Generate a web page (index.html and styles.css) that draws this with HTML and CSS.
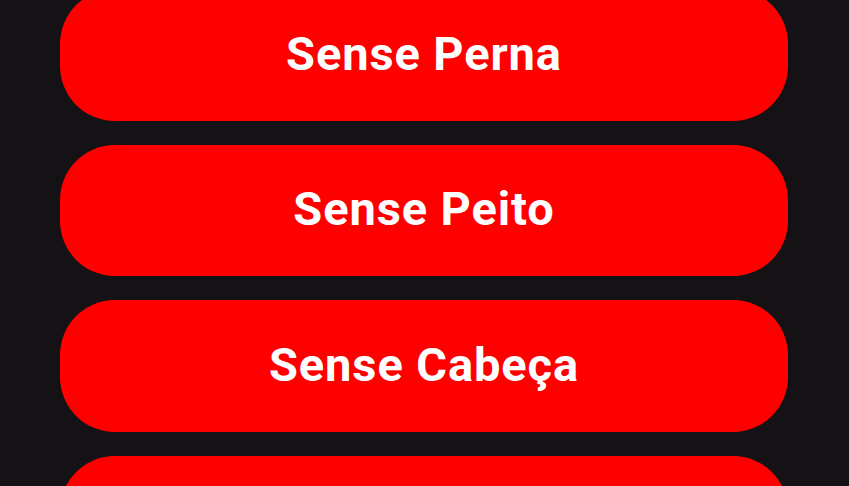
FILE: index.html
```html
<!DOCTYPE html>
<html>
<head>
<meta charset="utf-8">
<link rel="stylesheet" href="styles.css">
</head>
<body>
<div class="list">
  <button class="btn">Sense Perna</button>
  <button class="btn">Sense Peito</button>
  <button class="btn">Sense Cabeça</button>
  <button class="btn" aria-label="Sense Braço"></button>
</div>
</body>
</html>
```
FILE: styles.css
```css
html, body {
  margin: 0;
  padding: 0;
  background: #141214;
  height: 486px;
  overflow: hidden;
}
.list {
  display: flex;
  flex-direction: column;
  gap: 24px;
  padding: 0 61px 0 60px;
  margin-top: -11px;
}
.btn {
  height: 131.5px;
  border: none;
  border-radius: 55px;
  background: #ff0000;
  color: #ffffff;
  font-family: Roboto, "Liberation Sans", sans-serif;
  font-weight: 700;
  font-size: 47px;
  letter-spacing: 0.9px;
  padding: 0 0 3px 0;
  margin: 0;
  flex: none;
}
```
